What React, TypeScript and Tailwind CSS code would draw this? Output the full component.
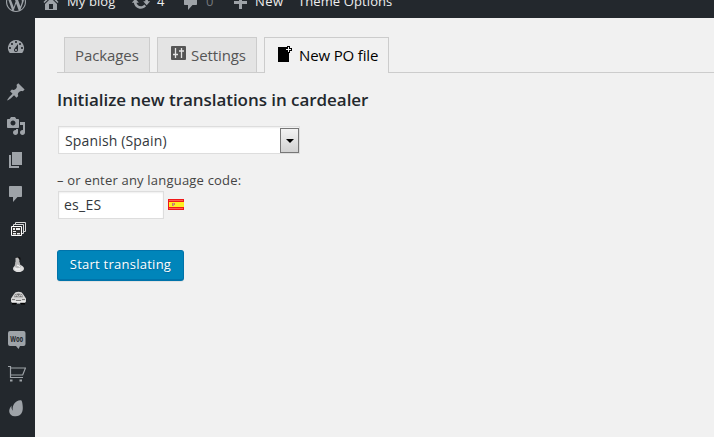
import React from "react";

const paths = {
  dashboard:
    "M3.76 16h12.48A7.998 7.998 0 0 0 10 3a7.998 7.998 0 0 0-6.24 13zM10 4c.55 0 1 .45 1 1s-.45 1-1 1-1-.45-1-1 .45-1 1-1zM6 6c.55 0 1 .45 1 1s-.45 1-1 1-1-.45-1-1 .45-1 1-1zm8 0c.55 0 1 .45 1 1s-.45 1-1 1-1-.45-1-1 .45-1 1-1zm-5.37 5.55L12 7v6c0 1.1-.9 2-2 2s-2-.9-2-2c0-.57.24-1.08.63-1.45zM4 10c.55 0 1 .45 1 1s-.45 1-1 1-1-.45-1-1 .45-1 1-1zm12 0c.55 0 1 .45 1 1s-.45 1-1 1-1-.45-1-1 .45-1 1-1zm-5 3c0-.55-.45-1-1-1s-1 .45-1 1 .45 1 1 1 1-.45 1-1z",
  pin: "M10.44 3.02l1.82-1.82 6.36 6.35-1.83 1.82c-1.05-.68-2.48-.57-3.41.36l-.75.75c-.92.93-1.04 2.35-.35 3.41l-1.83 1.82-2.41-2.41-2.8 2.79c-.42.42-3.38 2.71-3.8 2.29s1.86-3.39 2.28-3.81l2.79-2.79L4.1 9.36l1.83-1.82c1.05.69 2.48.57 3.4-.36l.75-.75c.93-.92 1.05-2.35.36-3.41z",
  media:
    "M13 11V4c0-.55-.45-1-1-1h-1.67L9 1H5L3.67 3H2c-.55 0-1 .45-1 1v7c0 .55.45 1 1 1h10c.55 0 1-.45 1-1zM7 4.5c1.38 0 2.5 1.12 2.5 2.5S8.38 9.5 7 9.5 4.5 8.38 4.5 7 5.62 4.5 7 4.5zM14 6h5v10.5c0 1.38-1.12 2.5-2.5 2.5S14 17.88 14 16.5s1.12-2.5 2.5-2.5c.17 0 .34.02.5.05V9h-3V6zm-4 8.05V13h2v3.5c0 1.38-1.12 2.5-2.5 2.5S7 17.88 7 16.5 8.12 14 9.5 14c.17 0 .34.02.5.05z",
  page: "M6 15V2h10v13H6zm-1 1h8v2H3V5h2v11z",
  comment: "M4 2h11c.6 0 1 .4 1 1v9c0 .6-.4 1-1 1h-3.500l-4.500 5v-5H4c-.6 0-1-.4-1-1V3c0-.6.4-1 1-1z",
  home: "M16 8.500l1.530 1.530-1.060 1.060L10 4.600l-6.470 6.490-1.060-1.060L10 2.500l4 4v-2h2v4zm-6-2.460l6 5.990V18H4v-5.970zM12 17v-5H8v5h4z",
  update:
    "M10.200 3.280c3.530 0 6.430 2.610 6.920 6h2.080l-3.500 4-3.500-4h2.320c-.45-1.970-2.210-3.450-4.320-3.450-1.450 0-2.730.71-3.540 1.780L4.950 5.660C6.230 4.200 8.110 3.280 10.200 3.280zm-.4 13.440c-3.520 0-6.430-2.610-6.920-6H.8l3.500-4c1.170 1.330 2.330 2.670 3.500 4H5.480c.45 1.970 2.210 3.450 4.320 3.450 1.450 0 2.730-.71 3.540-1.780l1.710 1.950c-1.280 1.460-3.150 2.380-5.250 2.380z",
  plus: "M17 9v3h-5v5H9v-5H4V9h5V4h3v5h5z",
};

function Dash({ name }: { name: keyof typeof paths }) {
  return (
    <svg viewBox="0 0 20 20" className="h-5 w-5 shrink-0 fill-[#9ea3a8]">
      <path fillRule="evenodd" d={paths[name]} />
    </svg>
  );
}

function WordPress() {
  return (
    <svg viewBox="0 0 20 20" className="h-5 w-5 shrink-0 fill-[#9ea3a8]">
      <path d="M20 10c0-5.510-4.490-10-10-10C4.480 0 0 4.490 0 10c0 5.520 4.480 10 10 10 5.510 0 10-4.480 10-10zM7.780 15.370L4.370 6.220c.55-.02 1.170-.08 1.170-.08.5-.06.44-1.130-.06-1.110 0 0-1.450.11-2.370.11-.18 0-.37 0-.58-.01C4.120 2.690 6.870 1.110 10 1.110c2.330 0 4.450.87 6.050 2.340-.68-.11-1.650.39-1.650 1.580 0 .74.45 1.360.9 2.100.35.61.55 1.360.55 2.460 0 1.490-1.400 5-1.400 5l-3.030-8.370c.54-.02.82-.17.82-.17.5-.05.44-1.250-.06-1.220 0 0-1.440.12-2.380.12-.87 0-2.330-.12-2.330-.12-.5-.03-.56 1.200-.06 1.220l.92.08 1.260 3.410zM17.410 10c.24-.64.74-1.870.43-4.250.7 1.290 1.050 2.710 1.050 4.250 0 3.290-1.730 6.240-4.400 7.780.97-2.590 1.940-5.200 2.920-7.780zM6.100 18.090C3.120 16.650 1.110 13.530 1.110 10c0-1.300.23-2.480.72-3.590C3.250 10.300 4.670 14.200 6.100 18.090zm4.030-6.630l2.580 6.980c-.86.29-1.760.45-2.710.45-.79 0-1.570-.11-2.290-.33.81-2.380 1.620-4.740 2.420-7.100z" />
    </svg>
  );
}

function Slides() {
  return (
    <svg viewBox="0 0 20 20" className="h-5 w-5">
      <g fill="#23282d" stroke="#d8d8d8" strokeWidth="1">
        <path d="M9.500 4.500h10v9h-10z" />
        <path d="M7.500 6.500h10v9h-10z" />
        <path d="M5.500 8.500h10v9h-10z" fill="#333" stroke="#fff" />
      </g>
      <path d="M7 10h2v2H7zM10 10h4v2h-4zM7 13h3v1H7zM7 15h3v1.500H7zM11 15h3v1.500h-3z" fill="#eee" />
    </svg>
  );
}

function Chess() {
  return (
    <svg viewBox="0 0 20 20" className="h-5 w-5">
      <circle cx="12.500" cy="7" r="2.200" fill="#111" />
      <path d="M9.500 6l2.500-.500 1.500 2.500-.5 3.500H9.500z" fill="#bdbdbd" />
      <ellipse cx="12.500" cy="16.500" rx="5.500" ry="3.700" fill="#ddd" />
      <path d="M9.500 10h4l1.500 5-3.500 1.500-3-2z" fill="#b9b9b9" />
      <path d="M11 13l3 1.500M9 17h5" stroke="#fff" />
    </svg>
  );
}

function Car() {
  return (
    <svg viewBox="0 0 20 20" className="h-5 w-5">
      <path d="M6 16h4v2.500H6zM15 16h4v2.500h-4z" fill="#050505" />
      <path d="M5 12.500L8 8q1-2.200 4.500-2.200T17 8l3 4.500v3q0 1-1 1H6q-1 0-1-1z" fill="#d6d6d6" />
      <path d="M9 8.300q3.500-1.600 7 0l1.200 2.900H7.800z" fill="#777" />
      <path d="M9 10.500c0-2 2.800-2 3 0M13 10.500c0-2 2.800-2 3 0" stroke="#eee" fill="none" />
      <path d="M6 13.500h3M16 13.500h3M10 14.500h5" stroke="#777" />
      <path d="M6 16h13M11 17h3" stroke="#fff" />
    </svg>
  );
}

function Woo() {
  return (
    <svg viewBox="0 0 20 20" className="h-5 w-5">
      <path d="M4 1h13.500q2 0 2 2v11q0 2-2 2H14l-1.500 3-2.500-3H4q-2 0-2-2V3q0-2 2-2z" fill="#9ea3a8" />
      <text x="10.700" y="11.500" textAnchor="middle" textLength="13" lengthAdjust="spacingAndGlyphs" className="fill-[#23282d] font-['Open_Sans',sans-serif] text-[8px] font-bold">Woo</text>
    </svg>
  );
}

function Cart() {
  return (
    <svg viewBox="0 0 20 20" className="h-5 w-5" fill="none" stroke="#9ea3a8" strokeWidth="1.200">
      <path d="M2 2.500h2.500v11H17M4.500 4h15l-2.800 7H4.500" />
      <path d="M4 15.500h2.500v2H4zM13.500 15.500H16v2h-2.500z" fill="#9ea3a8" stroke="none" />
    </svg>
  );
}

function Leaf() {
  return (
    <svg viewBox="0 0 20 20" className="h-5 w-5">
      <path d="M15.200 2.300C10 1.500 5.800 7 6.800 12.700c-1.200-1.600-1.600-3.400-1.100-5.200C1.500 11.800 2.700 17.900 8.700 18.300c6.300.5 8.700-4.400 8-10.300-.2-2.500-.7-5.400-1.500-5.700z" fill="#9ea3a8" />
    </svg>
  );
}

function Row({ children }: { children: React.ReactNode }) {
  return <div className="flex h-[34px] shrink-0 items-center pl-1.5">{children}</div>;
}

export default function App() {
  return (
    <div className="flex h-[437px] w-[714px] flex-col overflow-hidden bg-[#f1f1f1] font-['Open_Sans',sans-serif]">
      <header className="flex h-[18px] shrink-0 items-end overflow-hidden bg-[#23282d] text-[13px] text-[#eee]">
        <div className="flex h-8 shrink-0 items-center whitespace-nowrap">
          <div className="flex w-[41px] pl-1.5"><WordPress /></div>
          <div className="flex w-[90px] items-center gap-1.5"><Dash name="home" /><span className="tracking-[0.1px]">My blog</span></div>
          <div className="flex w-[50px] items-center gap-1.5"><Dash name="update" /><span>4</span></div>
          <div className="flex w-[49px] items-center gap-[5px]"><Dash name="comment" /><span className="text-[#73777b]">0</span></div>
          <div className="flex w-[68px] items-center gap-[5px]"><Dash name="plus" /><span className="tracking-[0.4px]">New</span></div>
          <span className="tracking-[0.1px]">Theme Options</span>
        </div>
      </header>
      <div className="flex min-h-0 flex-1">
        <aside className="flex w-[35px] shrink-0 flex-col bg-[#23282d] pt-3">
          <Row><Dash name="dashboard" /></Row>
          <div className="mt-[11px]">
            <Row><Dash name="pin" /></Row>
            <Row><Dash name="media" /></Row>
            <Row><Dash name="page" /></Row>
            <Row><Dash name="comment" /></Row>
            <Row><Slides /></Row>
            <Row><Chess /></Row>
            <Row><Car /></Row>
          </div>
          <div className="mt-2.5">
            <Row><Woo /></Row>
            <Row><Cart /></Row>
            <Row><Leaf /></Row>
          </div>
        </aside>
        <main className="flex min-w-0 flex-1 flex-col items-start pl-[22px] pt-[19px] text-[#32373c]">
          <nav className="flex h-9 w-full gap-[7px] border-b border-[#ccc] pl-[7px] text-[15px] text-[#555]">
            <div className="flex h-9 w-[86px] items-center border border-[#ccc] bg-[#e4e4e4] pl-2.5">
              <span className="font-medium tracking-[-0.1px]">Packages</span>
            </div>
            <div className="flex h-9 w-[100px] items-center border border-[#ccc] bg-[#e4e4e4] pl-[13px]">
              <svg viewBox="0 0 15 14" className="mb-1 h-3.5 w-[15px]">
                <rect width="15" height="14" rx="1" fill="#555" />
                <path d="M4.500 2v10M2 8.500h5M10.500 2v10M8 5h5" stroke="#e4e4e4" strokeWidth="1.300" />
              </svg>
              <span className="ml-[5px] font-medium tracking-[-0.1px]">Settings</span>
            </div>
            <div className="flex h-9 w-[125px] items-center border border-b-0 border-[#ccc] bg-[#f1f1f1] pl-3 text-black">
              <svg viewBox="0 0 16 18" shapeRendering="crispEdges" className="mb-1 h-[18px] w-4">
                <path d="M1 2h11v15H1z" fill="#000" />
                <path d="M10 1h3v2h2v3h-2v2h-3V6H8V3h2z" fill="#000" />
                <path d="M11 2h1v2h2v1h-2v2h-1V5H9V4h2z" fill="#f1f1f1" />
              </svg>
              <span className="ml-1.5 font-medium tracking-[-0.15px]">New PO file</span>
            </div>
          </nav>
          <h1 className="mt-[15px] text-[17px] font-semibold leading-6 tracking-[-0.05px] text-[#23282d]">Initialize new translations in cardealer</h1>
          <div className="ml-px mt-3.5 flex h-7 w-[242px] border border-[#ddd] bg-white pl-1.5 shadow-[inset_0_1px_2px_rgba(0,0,0,0.07)]">
            <span className="flex-1 text-[14px] leading-[27px] tracking-[0.15px]">Spanish (Spain)</span>
            <div className="my-px flex h-[25px] w-[19px] items-center justify-center border border-[#777] bg-gradient-to-b from-[#f3f3f3] to-[#d2d2d2]">
              <svg viewBox="0 0 8 4" className="h-1 w-2"><path d="M0 0h8L4 4z" /></svg>
            </div>
          </div>
          <label className="mt-4 text-[13px] leading-5 tracking-[0.2px] text-[#444]">– or enter any language code:</label>
          <div className="ml-px mt-px flex items-center gap-1">
            <div className="h-7 w-[106px] border border-[#ddd] bg-white pl-[5px] text-[14px] leading-[26px] tracking-[0.25px] shadow-[inset_0_1px_2px_rgba(0,0,0,0.07)]">es_ES</div>
            <svg viewBox="0 0 16 11" shapeRendering="crispEdges" className="mb-px h-[11px] w-4">
              <path fill="#f01818" d="M0 0h16v11H0z" />
              <path fill="#ffef22" d="M1 3h15v5H1z" />
              <path d="M1 1.500h14M1 9.500h14" stroke="#ff6050" />
              <path d="M4 4h1v3H4zM6 4h1v2H6z" fill="#d77758" />
              <path d="M5 4h1v3H5z" fill="#b4a398" />
            </svg>
          </div>
          <button className="mt-[31px] h-[31px] w-[127px] whitespace-nowrap rounded-[3px] border border-b-2 border-[#0073aa] bg-[#0085ba] text-[13px] tracking-[0.25px] text-white shadow-[0_1px_0_rgba(0,0,0,0.06)] [text-shadow:0_1px_1px_#006799]">Start translating</button>
        </main>
      </div>
    </div>
  );
}
